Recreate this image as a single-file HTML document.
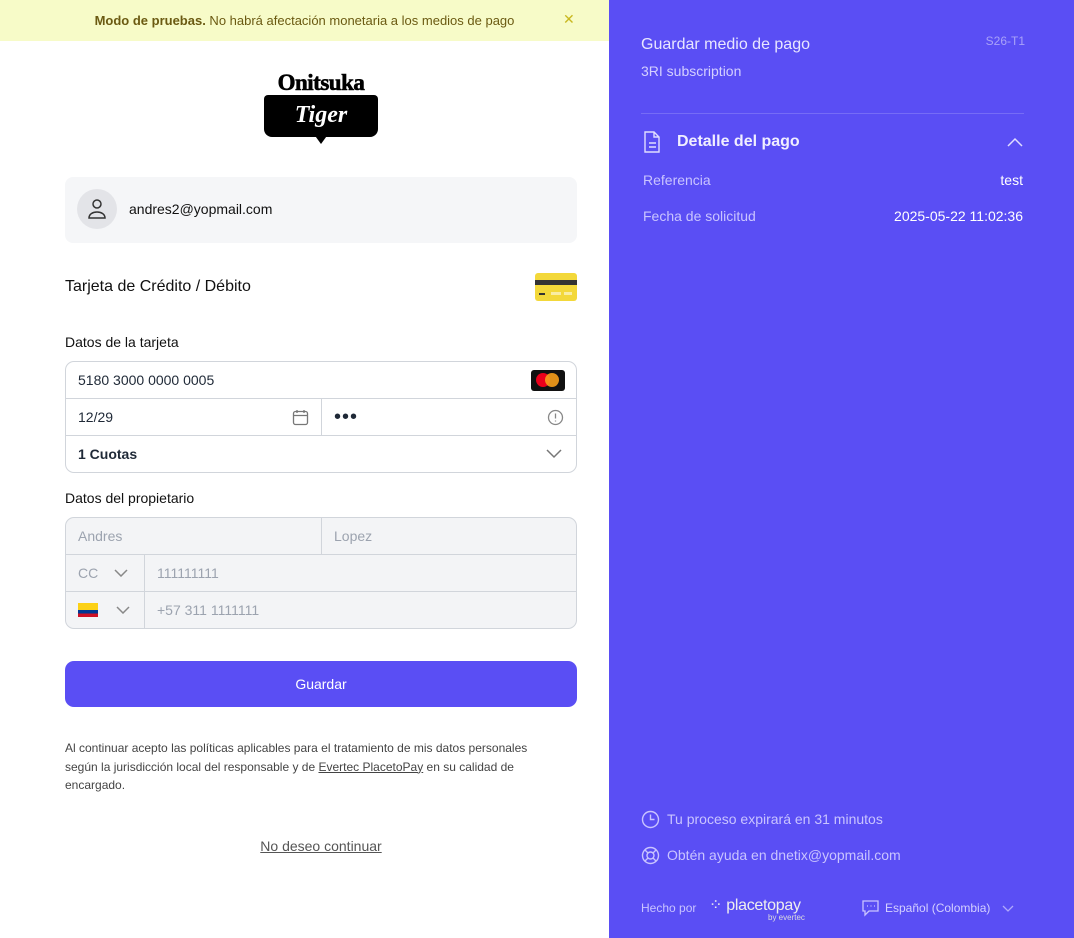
<!DOCTYPE html>
<html><head><meta charset="utf-8"><style>
*{box-sizing:border-box;margin:0;padding:0}
body{width:1074px;height:938px;overflow:hidden;font-family:"Liberation Sans",sans-serif;background:#fff;position:relative;color:#1f2937}
.left{position:absolute;left:0;top:0;width:609px;height:938px}
.banner{height:41px;background:#f7fbc8;display:flex;align-items:center;justify-content:center;font-size:13px;color:#6b5a12}
.banner b{color:#6b5a12}
.right{position:absolute;left:609px;top:0;width:465px;height:938px;background:#5a4ef4;color:#fff}
.abs{position:absolute}
.box{position:absolute;left:65px;width:512px;border:1px solid #d1d5db;border-radius:9px;overflow:hidden}
.row{height:37px;border-bottom:1px solid #d1d5db;display:flex;align-items:center;font-size:14px;position:relative}
.row:last-child{border-bottom:none}
.gray{background:#f3f4f6;color:#9ca3af}
</style></head><body>
<div class="left">
<div class="banner"><span><b>Modo de pruebas.</b> No habrá afectación monetaria a los medios de pago</span><span style="position:absolute;left:563px;top:11px;color:#c9b820;font-size:14px">✕</span></div>
<div class="abs" style="left:263px;top:72px;width:116px;text-align:center;font-family:'Liberation Serif',serif;font-weight:900;font-size:23px;line-height:22px;color:#000;letter-spacing:-0.5px;-webkit-text-stroke:0.6px #000">Onitsuka</div>
<div class="abs" style="left:264px;top:95px;width:114px;height:42px;background:#000;border-radius:4px 4px 8px 8px;color:#fff;font-family:'Liberation Serif',serif;font-style:italic;font-weight:bold;font-size:24px;text-align:center;line-height:40px">Tiger</div>
<div class="abs" style="left:313px;top:133px;width:16px;height:11px;background:#000;clip-path:polygon(0 0,100% 0,50% 100%)"></div>
<div class="abs" style="left:65px;top:177px;width:512px;height:66px;background:#f5f6f8;border-radius:8px"></div>
<div class="abs" style="left:77px;top:189px;width:40px;height:40px;border-radius:50%;background:#e3e4e8"></div>
<svg class="abs" style="left:86px;top:197px" width="22" height="24" viewBox="0 0 22 24" fill="none" stroke="#333" stroke-width="1.5"><circle cx="11" cy="7" r="4"/><path d="M3 21c0-4 4-6 8-6s8 2 8 6z"/></svg>
<div class="abs" style="left:129px;top:201px;font-size:14px;color:#111">andres2@yopmail.com</div>
<div class="abs" style="left:65px;top:278px;font-size:16px;color:#111">Tarjeta de Crédito / Débito</div>
<div class="abs" style="left:535px;top:273px;width:42px;height:28px;background:#f3d83a;border-radius:3px"><div style="margin-top:7px;height:5px;background:#333"></div><div style="position:absolute;left:4px;top:20px;width:6px;height:2px;background:#333"></div><div style="position:absolute;left:16px;top:19px;width:10px;height:3px;background:#fff8"></div><div style="position:absolute;left:29px;top:19px;width:8px;height:3px;background:#fff8"></div></div>
<div class="abs" style="left:65px;top:334px;font-size:14px;color:#111">Datos de la tarjeta</div>
<div class="box" style="top:361px">
<div class="row" style="padding-left:12px">5180 3000 0000 0005<div class="abs" style="right:11px;top:8px;width:34px;height:21px;background:#111;border-radius:3px"><div class="abs" style="left:5px;top:3px;width:14px;height:14px;border-radius:50%;background:#eb001b"></div><div class="abs" style="left:14px;top:3px;width:14px;height:14px;border-radius:50%;background:#f79e1b;opacity:.9"></div></div></div>
<div class="row"><div style="width:256px;height:100%;border-right:1px solid #d1d5db;padding-left:12px;display:flex;align-items:center;position:relative">12/29<svg class="abs" style="right:12px;top:10px" width="17" height="17" viewBox="0 0 17 17" fill="none" stroke="#777" stroke-width="1.3"><rect x="1.5" y="2.5" width="14" height="13" rx="2"/><path d="M1.5 6.5h14M5 1v3M12 1v3"/></svg></div><div style="padding-left:12px;font-size:20px;letter-spacing:1px;line-height:10px">•••</div><svg class="abs" style="right:12px;top:10px" width="17" height="17" viewBox="0 0 17 17" fill="none" stroke="#888" stroke-width="1.3"><circle cx="8.5" cy="8.5" r="7"/><path d="M8.5 4.5v5M8.5 11.5v1"/></svg></div>
<div class="row" style="padding-left:12px;font-weight:bold;height:36px">1 Cuotas<svg class="abs" style="right:14px;top:13px" width="16" height="10" viewBox="0 0 16 10" fill="none" stroke="#777" stroke-width="1.5"><path d="M1 1l7 7 7-7"/></svg></div>
</div>
<div class="abs" style="left:65px;top:490px;font-size:14px;color:#111">Datos del propietario</div>
<div class="box gray" style="top:517px">
<div class="row"><div style="width:256px;height:100%;border-right:1px solid #d1d5db;padding-left:12px;display:flex;align-items:center">Andres</div><div style="padding-left:12px">Lopez</div></div>
<div class="row"><div style="width:79px;height:100%;border-right:1px solid #d1d5db;padding-left:12px;display:flex;align-items:center">CC<svg style="margin-left:16px" width="14" height="8" viewBox="0 0 14 8" fill="none" stroke="#888" stroke-width="1.5"><path d="M1 1l6 6 6-6"/></svg></div><div style="padding-left:12px">111111111</div></div>
<div class="row" style="height:36px"><div style="width:79px;height:100%;border-right:1px solid #d1d5db;padding-left:12px;display:flex;align-items:center"><div style="width:20px;height:14px;background:linear-gradient(#fcd116 0 50%,#003893 50% 75%,#ce1126 75%)"></div><svg style="margin-left:18px" width="14" height="8" viewBox="0 0 14 8" fill="none" stroke="#888" stroke-width="1.5"><path d="M1 1l6 6 6-6"/></svg></div><div style="padding-left:12px">+57 311 1111111</div></div>
</div>
<div class="abs" style="left:65px;top:661px;width:512px;height:46px;background:#5a4ef4;border-radius:9px;color:#fff;font-size:14px;text-align:center;line-height:46px">Guardar</div>
<div class="abs" style="left:65px;top:739px;width:492px;font-size:12px;line-height:18.5px;color:#444">Al continuar acepto las políticas aplicables para el tratamiento de mis datos personales según la jurisdicción local del responsable y de <u>Evertec PlacetoPay</u> en su calidad de encargado.</div>
<div class="abs" style="left:65px;top:838px;width:512px;text-align:center;font-size:14px;color:#555"><u>No deseo continuar</u></div>
</div>
<div class="right">
<div class="abs" style="left:32px;top:36px;font-size:16px;color:#e8e6ff">Guardar medio de pago</div>
<div class="abs" style="left:32px;top:63px;font-size:14px;color:#d4d0ff">3RI subscription</div>
<div class="abs" style="right:49px;top:34px;font-size:12px;color:#a9a2f8">S26-T1</div>
<div class="abs" style="left:32px;top:113px;width:383px;height:1px;background:#766cf6"></div>
<svg class="abs" style="left:33px;top:131px" width="20" height="22" viewBox="0 0 20 22" fill="none" stroke="#e0ddff" stroke-width="1.4"><path d="M3 1h9l5 5v15H3z M12 1v5h5M7 12h7M7 16h7"/></svg>
<div class="abs" style="left:68px;top:133px;font-size:16px;font-weight:bold;color:#f0eeff">Detalle del pago</div>
<svg class="abs" style="right:51px;top:137px" width="16" height="10" viewBox="0 0 16 10" fill="none" stroke="#e0ddff" stroke-width="1.5"><path d="M1 9l7-7 7 7"/></svg>
<div class="abs" style="left:34px;top:172px;font-size:14px;color:#c9c4ff">Referencia</div>
<div class="abs" style="right:51px;top:172px;font-size:14px;color:#fff">test</div>
<div class="abs" style="left:34px;top:208px;font-size:14px;color:#c9c4ff">Fecha de solicitud</div>
<div class="abs" style="right:51px;top:208px;font-size:14px;color:#fff">2025-05-22 11:02:36</div>
<svg class="abs" style="left:32px;top:810px" width="19" height="19" viewBox="0 0 19 19" fill="none" stroke="#c9c4ff" stroke-width="1.4"><circle cx="9.5" cy="9.5" r="8"/><path d="M9.5 4.5v5h4"/></svg>
<div class="abs" style="left:58px;top:811px;font-size:14px;color:#c9c4ff">Tu proceso expirará en 31 minutos</div>
<svg class="abs" style="left:32px;top:846px" width="19" height="19" viewBox="0 0 19 19" fill="none" stroke="#c9c4ff" stroke-width="1.4"><circle cx="9.5" cy="9.5" r="8"/><circle cx="9.5" cy="9.5" r="3.5"/><path d="M4 4l3 3M15 4l-3 3M4 15l3-3M15 15l-3-3"/></svg>
<div class="abs" style="left:58px;top:847px;font-size:14px;color:#c9c4ff">Obtén ayuda en dnetix@yopmail.com</div>
<div class="abs" style="left:32px;top:901px;font-size:12px;color:#c9c4ff">Hecho por</div>
<div class="abs" style="left:100px;top:895px;font-size:16px;color:#eee;letter-spacing:-0.3px">⁘ placetopay</div>
<div class="abs" style="left:159px;top:913px;font-size:8px;color:#ddd">by evertec</div>
<svg class="abs" style="left:252px;top:899px" width="19" height="18" viewBox="0 0 19 18" fill="none" stroke="#c9c4ff" stroke-width="1.3"><path d="M2 2h15v10H8l-4 4v-4H2z"/><path d="M6 7h1M9.5 7h1M13 7h1"/></svg>
<div class="abs" style="left:276px;top:901px;font-size:12px;color:#d4d0ff">Español (Colombia)</div>
<svg class="abs" style="left:393px;top:905px" width="12" height="8" viewBox="0 0 12 8" fill="none" stroke="#b0a9fb" stroke-width="1.3"><path d="M1 1l5 5 5-5"/></svg>
</div>
</body></html>
